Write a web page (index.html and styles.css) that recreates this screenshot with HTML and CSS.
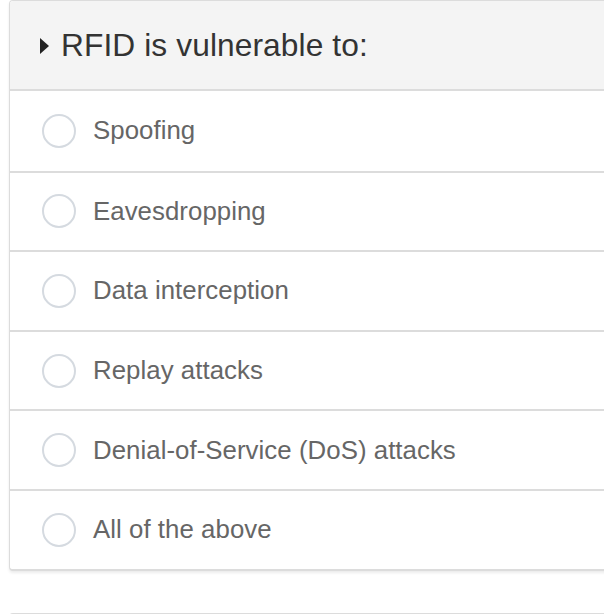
FILE: index.html
```html
<!DOCTYPE html>
<html>
<head>
<meta charset="utf-8">
<link rel="stylesheet" href="styles.css">
</head>
<body>
<div class="page">
  <div class="card">
    <div class="card-header">
      <span class="caret"></span>
      <span class="question">RFID is vulnerable to:</span>
    </div>
    <div class="option"><span class="radio"></span><span class="label">Spoofing</span></div>
    <div class="option"><span class="radio"></span><span class="label">Eavesdropping</span></div>
    <div class="option"><span class="radio"></span><span class="label">Data interception</span></div>
    <div class="option"><span class="radio"></span><span class="label">Replay attacks</span></div>
    <div class="option"><span class="radio"></span><span class="label">Denial-of-Service (DoS) attacks</span></div>
    <div class="option"><span class="radio"></span><span class="label">All of the above</span></div>
  </div>
  <div class="card next"></div>
</div>
</body>
</html>
```
FILE: styles.css
```css
html, body {
  margin: 0;
  padding: 0;
  overflow: hidden;
  background: #fff;
}
.page {
  padding-left: 9px;
  font-family: "Liberation Sans", Arial, sans-serif;
}
.card {
  width: 640px;
  border: 1px solid #dcdcdc;
  border-bottom: 2px solid #dcdcdc;
  border-radius: 4px;
  box-shadow: 0 2px 3px rgba(0,0,0,0.08);
  overflow: hidden;
  background: #fff;
}
.card-header {
  height: 90px;
  background: #f4f4f4;
  border-bottom: 2px solid #dcdcdc;
  display: flex;
  align-items: center;
  padding-left: 30px;
  box-sizing: border-box;
}
.caret {
  width: 0;
  height: 0;
  border-top: 8px solid transparent;
  border-bottom: 8px solid transparent;
  border-left: 9px solid #222;
  margin-right: 12px;
  margin-top: 1px;
}
.question {
  font-size: 31.7px;
  letter-spacing: 0.1px;
  color: #333;
}
.option {
  height: 79.6px;
  box-sizing: border-box;
  display: flex;
  align-items: center;
  padding-left: 32px;
}
.option + .option {
  border-top: 2px solid #dcdcdc;
}
.radio {
  width: 34px;
  height: 34px;
  box-sizing: border-box;
  border: 2px solid #d5dae0;
  border-radius: 50%;
  margin-right: 17px;
  flex: none;
}
.label {
  font-size: 25.8px;
  letter-spacing: 0.05px;
  color: #666;
}
.card.next {
  margin-top: 42px;
  height: 40px;
  border-bottom: none;
  box-shadow: none;
}
```
